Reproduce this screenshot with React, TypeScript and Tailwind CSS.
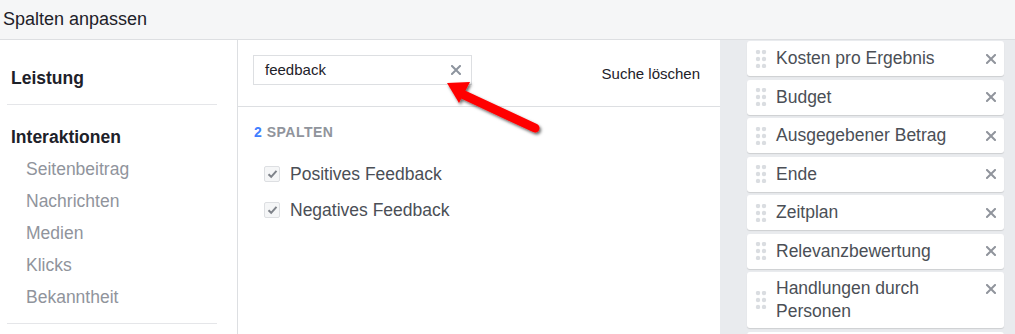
import React from "react";

const Grip = () => (
  <svg width="12" height="18" viewBox="0 0 12 18" className="shrink-0">
    {[2, 9, 16].map((y) =>
      [3, 9].map((x) => <circle key={`${x}-${y}`} cx={x} cy={y} r="2.2" fill="#dadde1" />)
    )}
  </svg>
);

const X = ({ c = "#90949c" }: { c?: string }) => (
  <svg width="10" height="10" viewBox="0 0 10 10">
    <path d="M1 1L9 9M9 1L1 9" stroke={c} strokeWidth="2" strokeLinecap="square" />
  </svg>
);

const Check = () => (
  <div className="w-[16px] h-[16px] rounded-[2px] border border-[#dddfe2] bg-[#f5f6f7] flex items-center justify-center">
    <svg width="11" height="10" viewBox="0 0 11 10">
      <path d="M1.5 5.2L4.2 7.8L9.5 1.8" stroke="#7f838a" strokeWidth="2" fill="none" />
    </svg>
  </div>
);

const cards: string[][] = [
  ["Kosten pro Ergebnis"],
  ["Budget"],
  ["Ausgegebener Betrag"],
  ["Ende"],
  ["Zeitplan"],
  ["Relevanzbewertung"],
  ["Handlungen durch", "Personen"],
  [""],
];

export default function App() {
  return (
    <div
      className="w-[1015px] h-[334px] overflow-hidden bg-white flex flex-col relative"
      style={{ fontFamily: '"Liberation Sans", Arial, sans-serif' }}
    >
      <div className="h-[40px] shrink-0 bg-[#f5f6f7] border-b border-[#dddfe2] flex items-center pl-[3px] text-[18px] text-[#1d2129]">
        Spalten anpassen
      </div>
      <div className="flex flex-1 min-h-0">
        <div className="w-[238px] shrink-0 border-r border-[#dddfe2] pl-[7px] pr-[20px]">
          <div className="h-[65px] border-b border-[#e5e6e9] flex items-center pl-[4px] pt-[13px] text-[17.5px] font-bold text-[#1d2129]">
            Leistung
          </div>
          <div className="pt-[22px] pl-[4px] border-b border-[#e5e6e9] pb-[10px]">
            <div className="text-[17.5px] font-bold text-[#1d2129] leading-[20px]">Interaktionen</div>
            <div className="flex flex-col pl-[15px] pt-[6px] text-[17.5px] text-[#90949c]">
              {["Seitenbeitrag", "Nachrichten", "Medien", "Klicks", "Bekanntheit"].map((t) => (
                <div key={t} className="h-[32px] leading-[32px]">
                  {t}
                </div>
              ))}
            </div>
          </div>
        </div>
        <div className="w-[482px] shrink-0 flex flex-col">
          <div className="h-[67px] border-b border-[#dddfe2] flex items-start pt-[15px] pl-[15px] pr-[20px] justify-between">
            <div className="w-[219px] h-[30px] border border-[#dddfe2] flex items-center justify-between pl-[11px] pr-[10px] text-[15px] text-[#1d2129]">
              <span>feedback</span>
              <X c="#8d949e" />
            </div>
            <div className="pt-[8px] text-[15px] text-[#1d2129]">Suche löschen</div>
          </div>
          <div className="pl-[16px] pt-[15px] text-[14px] font-bold text-[#90949c] tracking-[0.5px]">
            <span className="text-[#4080ff]">2</span> SPALTEN
          </div>
          <div className="pl-[26px] pt-[19px] flex flex-col gap-[12px]">
            {["Positives Feedback", "Negatives Feedback"].map((t) => (
              <div key={t} className="flex items-center gap-[10px] h-[24px] text-[17.5px] text-[#4b4f56]">
                <Check />
                <span>{t}</span>
              </div>
            ))}
          </div>
        </div>
        <div className="flex-1 bg-[#e9ebee] pl-[27px] pr-[11px] pt-[1px] flex flex-col gap-[3.5px]">
          {cards.map((lines, i) => (
            <div
              key={i}
              className={`shrink-0 bg-white rounded-[3px] shadow-[0_1px_1px_rgba(0,0,0,0.12)] flex justify-between pl-[8px] pr-[8px] ${
                lines.length > 1 ? "items-start py-[5px]" : "items-center h-[35px]"
              }`}
            >
              <div className="flex items-center gap-[9px]">
                <Grip />
                <div className="text-[17.5px] text-[#4b4f56] leading-[23px]">
                  {lines.map((l, j) => (
                    <div key={j}>{l}</div>
                  ))}
                </div>
              </div>
              {lines[0] !== "" && (
                <div className={lines.length > 1 ? "pt-[7px]" : ""}>
                  <X />
                </div>
              )}
            </div>
          ))}
        </div>
      </div>
      <svg
        className="absolute left-0 top-0 pointer-events-none"
        width="1015"
        height="334"
        viewBox="0 0 1015 334"
      >
        <defs>
          <filter id="sh" x="-20%" y="-50%" width="140%" height="200%">
            <feDropShadow dx="1.5" dy="2" stdDeviation="1.5" floodColor="#000" floodOpacity="0.6" />
          </filter>
        </defs>
        <g filter="url(#sh)">
          <line x1="535" y1="128" x2="462" y2="94" stroke="#ff0000" strokeWidth="9" strokeLinecap="round" />
          <polygon points="447,83 470,82 459,103" fill="#ff0000" />
        </g>
      </svg>
    </div>
  );
}
